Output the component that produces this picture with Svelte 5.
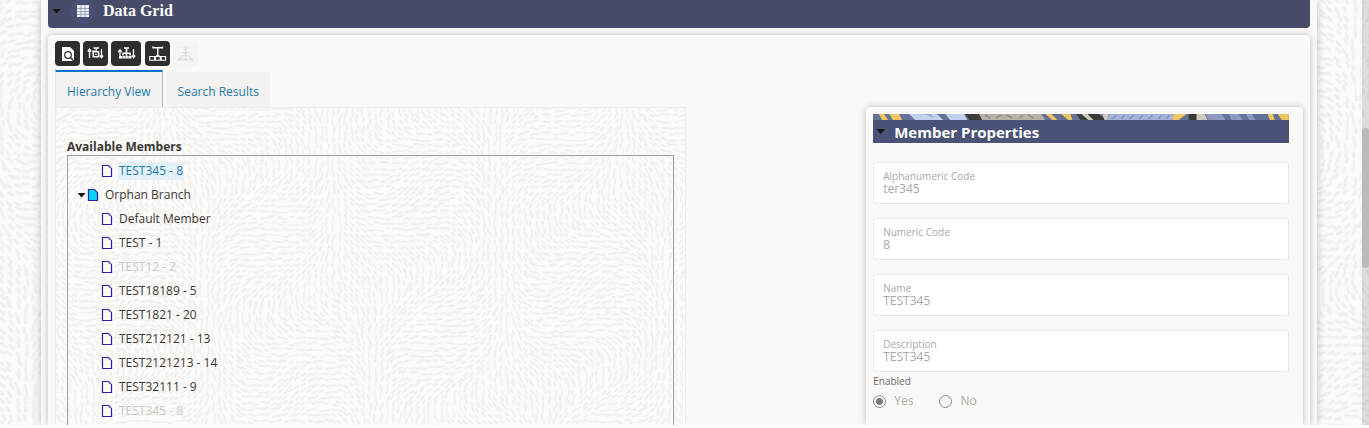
<script lang="ts">
	type Member = { name: string; disabled?: boolean; selected?: boolean };

	const topMembers: Member[] = [{ name: 'TEST345 - 8', selected: true }];

	const orphans: Member[] = [
		{ name: 'Default Member' },
		{ name: 'TEST - 1' },
		{ name: 'TEST12 - 2', disabled: true },
		{ name: 'TEST18189 - 5' },
		{ name: 'TEST1821 - 20' },
		{ name: 'TEST212121 - 13' },
		{ name: 'TEST2121213 - 14' },
		{ name: 'TEST32111 - 9' },
		{ name: 'TEST345 - 8', disabled: true }
	];

	const fields = [
		{ id: 'alpha-code', label: 'Alphanumeric Code', value: 'ter345' },
		{ id: 'num-code', label: 'Numeric Code', value: '8' },
		{ id: 'name', label: 'Name', value: 'TEST345' },
		{ id: 'description', label: 'Description', value: 'TEST345' }
	];

	// short strokes that follow a slow flow field, used as page grain
	function strokes(width: number, height: number, step: number, len: number) {
		let seed = 7;
		const rand = () => {
			seed = (seed * 16807) % 2147483647;
			return seed / 2147483647;
		};
		let d = '';
		for (let y = 0; y < height; y += step) {
			for (let x = 0; x < width; x += step) {
				const px = x + rand() * step * 0.5;
				const py = y + rand() * step * 0.5;
				const a = 1.3 + 1.1 * Math.sin(px / 37 + py / 61) + 0.9 * Math.cos(py / 43 - px / 71);
				const dx = (Math.cos(a) * len) / 2;
				const dy = (Math.sin(a) * len) / 2;
				d += `M${(px - dx).toFixed(1)} ${(py - dy).toFixed(1)}l${(dx * 2).toFixed(1)} ${(dy * 2).toFixed(1)}`;
			}
		}
		return d;
	}

	const coarse = strokes(460, 440, 8, 5);
	const fine = strokes(640, 330, 6, 4);
</script>

{#snippet grain(id: string, d: string, w: number, h: number, stroke: number)}
	<svg class="grain" aria-hidden="true">
		<defs>
			<pattern {id} width={w} height={h} patternUnits="userSpaceOnUse">
				<path {d} fill="none" stroke="#f2f1f0" stroke-width={stroke} stroke-linecap="round" />
			</pattern>
		</defs>
		<rect width="100%" height="100%" fill="url(#{id})" />
	</svg>
{/snippet}

{#snippet leaf(member: Member)}
	<li class="row leaf" class:disabled={member.disabled} role="treeitem" aria-selected={!!member.selected}>
		<svg class="page" viewBox="0 0 12 14" aria-hidden="true">
			<path d="M1.5 1.5h6l3 3.2v7.8h-9z" fill="#fff" stroke="#2322a8" stroke-width="1.2" />
		</svg>
		<span class="name" class:selected={member.selected}>{member.name}</span>
	</li>
{/snippet}

<div class="viewport">
	{@render grain('grain-page', coarse, 460, 440, 3)}

	<main class="page-body">
		<header class="section-bar">
			<button class="caret" aria-label="Collapse Data Grid"></button>
			<span class="badge">
				<svg viewBox="0 0 12 12" aria-hidden="true">
					<rect width="12" height="12" fill="#eef0f6" />
					<path d="M0 3.5h12M0 6.5h12M0 9.3h12M4 0v12M8 0v12" stroke="#7c86a8" stroke-width=".7" />
				</svg>
			</span>
			<h1>Data Grid</h1>
		</header>

		<section class="card">
			<div class="toolbar">
				<button class="tool" aria-label="View">
					<svg viewBox="0 0 25 25">
						<path d="M7 6h8l4 4v10H7z" fill="#fff" />
						<circle cx="13" cy="14" r="3.3" fill="none" stroke="#312d2a" stroke-width="1.2" />
						<path d="M15.4 16.4l3.2 3.4" stroke="#312d2a" stroke-width="1.4" />
					</svg>
				</button>
				<button class="tool" aria-label="Reorder level">
					<svg viewBox="0 0 25 25" fill="none" stroke="#fff">
						<path d="M6.5 17V9M4.8 10.5l1.7-2.3 1.7 2.3M18.5 8v8M16.8 14.5l1.7 2.2 1.7-2.2" stroke-width="1.3" />
						<path d="M10.5 7h5.5M13.2 7v3M9 10.3h3" stroke-width="1.4" />
						<path d="M10.2 10.8h5.4v5h-5.4z" stroke-width="1.5" stroke-linejoin="round" />
						<path d="M12 13.3h2" />
					</svg>
				</button>
				<button class="tool wide" aria-label="Reorder hierarchy">
					<svg viewBox="0 0 30 25" fill="none" stroke="#fff">
						<path d="M9 16V9M7.3 11L9 8.8l1.7 2.2M22.5 8v8M20.8 14.5l1.7 2.2 1.7-2.2" stroke-width="1.3" />
						<path d="M13 7h5M15.5 7v8M12 14.5v-2.2h7v2.2" stroke-width="1.6" />
						<path d="M8 16.3h12.5" stroke-width="2.6" />
						<path d="M11.3 15v3M14.2 15v3M17.2 15v3" stroke="#312d2a" stroke-width=".5" />
					</svg>
				</button>
				<button class="tool" aria-label="Expand branch">
					<svg viewBox="0 0 25 25" fill="none" stroke="#fff">
						<path d="M8 5.5v1.3h9.5V5.5M12.8 6.8v8.5M11 15h3.6" stroke-width="1.4" />
						<path d="M4.7 15.5h4.8v3.8H4.7zM10.4 15.5h4.8v3.8h-4.8zM16.1 15.5h4.5v3.8h-4.5z" stroke-width="1.1" />
					</svg>
				</button>
				<button class="tool off" aria-label="Show hierarchy" disabled>
					<svg viewBox="0 0 25 25" fill="none" stroke="#dcdad8">
						<circle cx="12.5" cy="7" r="1.6" />
						<path d="M12.5 8.6v8M9 11.5h7M6 17.5l6.5-4 6.5 4" />
						<path d="M5 18.5h4M10.5 18.5h4M16 18.5h4" stroke-width="2" />
					</svg>
				</button>
			</div>

			<div class="tabs" role="tablist">
				<button class="tab active" role="tab" aria-selected="true">Hierarchy View</button>
				<button class="tab" role="tab" aria-selected="false">Search Results</button>
			</div>

			<div class="columns">
				<div class="hierarchy" role="tabpanel">
					{@render grain('grain-panel', fine, 640, 330, 2)}
					<h2 id="members-title">Available Members</h2>
					<ul class="tree" role="tree" aria-labelledby="members-title">
						{#each topMembers as member}
							{@render leaf(member)}
						{/each}
						<li class="row branch" role="treeitem" aria-expanded="true" aria-selected="false">
							<span class="caret"></span>
							<svg class="page" viewBox="0 0 12 14" aria-hidden="true">
								<path d="M1.5 1.5h6l3 3.2v7.8h-9z" fill="#00d4ff" stroke="#2322a8" stroke-width="1.2" />
							</svg>
							<span class="name">Orphan Branch</span>
						</li>
						{#each orphans as member}
							{@render leaf(member)}
						{/each}
					</ul>
				</div>

				<aside class="properties">
					<svg class="ribbon" viewBox="0 0 415 6" preserveAspectRatio="none" aria-hidden="true">
						<rect width="415" height="6" fill="#66719a" />
						<path d="M6 0h5l4 6H9zM16 0h10l3 6H20z" fill="#f0c75e" />
						<path d="M36 0h28l6 6H42zM72 0h19l3 6H77z" fill="#c3cfee" />
						<path d="M50 0h8l3 4z" fill="#a3b1da" />
						<path d="M92 0h14l3 6H96z" fill="#3d3a38" />
						<path d="M106 0h62l4 6H109z" fill="#b5b1a9" />
						<path d="M112 1l5 3M123 4l5-3M133 1l6 3M146 4l4-3M155 1l5 3" stroke="#88847d" />
						<path d="M172 0h6l6 6h-5zM188 0h9l2 6h-4z" fill="#f0c75e" />
						<path d="M203 0h22l8 6h-26z" fill="#3d3a38" />
						<path d="M208 0h6l6 6h-5zM229 0h6v6h-4z" fill="#cfcbc3" />
						<path d="M236 0h64v6h-67z" fill="#a5b1d9" />
						<path d="M239 5l4-4M248 5l3-4M256 5l4-4M266 5l3-4M275 5l4-4M285 5l3-4M293 5l3-4" stroke="#7582ad" />
						<path d="M300 0h13l-8 6h-6z" fill="#f0c75e" />
						<path d="M315 0h8v6h-8z" fill="#3d3a38" />
						<path d="M323 0h8l3 6h-11z" fill="#cfcbc3" />
						<path d="M332 0h16l4 6h-17zM355 0h10l4 6h-11zM372 0h6l4 6h-6z" fill="#8d99c3" />
						<path d="M394 0h5l2 6h-5zM404 0h11v6h-7z" fill="#f0c75e" />
					</svg>
					<header class="props-bar">
						<button class="caret" aria-label="Collapse Member Properties"></button>
						<h2>Member Properties</h2>
					</header>

					<div class="fields">
						{#each fields as field}
							<div class="field">
								<label for={field.id}>{field.label}</label>
								<input id={field.id} type="text" value={field.value} disabled />
							</div>
						{/each}
					</div>

					<fieldset class="enabled" disabled>
						<legend>Enabled</legend>
						<div class="options">
							<label><input type="radio" name="enabled" checked /> Yes</label>
							<label><input type="radio" name="enabled" /> No</label>
						</div>
					</fieldset>
				</aside>
			</div>
		</section>
	</main>

	<div class="scrollbar" aria-hidden="true"><div class="thumb"></div></div>
</div>

<style>
	:global(body) {
		background: #fff;
	}
	.viewport {
		position: relative;
		display: flex;
		height: calc(100vh - 3px);
		overflow: hidden;
		background: #fcfbfa;
		color: #3a3734;
		font-family: 'Segoe UI', 'Open Sans', 'Noto Sans', sans-serif;
		font-size: 12px;
	}
	.grain {
		position: absolute;
		inset: 0;
		width: 100%;
		height: 100%;
	}
	button {
		border: 0;
		padding: 0;
		font: inherit;
		cursor: pointer;
	}
	h1,
	h2 {
		margin: 0;
	}
	.page-body {
		position: relative;
		flex: 1;
		display: flex;
		flex-direction: column;
		gap: 7px;
		margin: 0 45px 0 41px;
		padding: 0 7px;
		background: #fbf9f8;
		box-shadow: 0 0 8px rgba(0, 0, 0, 0.25);
	}
	.section-bar {
		display: flex;
		align-items: center;
		box-sizing: border-box;
		height: 28px;
		padding: 0 4px 6px;
		border-radius: 0 0 4px 4px;
		background: #474b68;
		color: #fff;
	}
	.caret {
		width: 9px;
		height: 5px;
		background: #161513;
		clip-path: polygon(0 0, 100% 0, 50% 100%);
	}
	.badge {
		display: grid;
		place-items: center;
		width: 25px;
		height: 25px;
		margin: 0 8px 0 9px;
		border-radius: 50%;
		background: #475178;
	}
	.badge svg {
		width: 12px;
		height: 12px;
	}
	h1 {
		font: bold 16px 'Liberation Serif', 'Times New Roman', serif;
	}
	.card {
		flex: 1;
		display: flex;
		flex-direction: column;
		padding: 6px 7px 0;
		border-radius: 4px 4px 0 0;
		background: #fbf9f8;
		box-shadow: 0 0 6px rgba(0, 0, 0, 0.25);
	}
	.toolbar {
		display: flex;
		gap: 3px;
		margin-bottom: 4px;
	}
	.tool {
		width: 25px;
		height: 25px;
		border-radius: 4px;
		background: #312d2a;
	}
	.tool.wide {
		width: 30px;
		margin-right: 1px;
	}
	.tool.off {
		background: #f7f4f3;
	}
	.tool svg {
		display: block;
		width: 100%;
		height: 100%;
	}
	.tabs {
		display: flex;
		gap: 4px;
	}
	.tab {
		box-sizing: border-box;
		height: 37px;
		padding: 4px 11px 0;
		border-top: 2px solid transparent;
		background: #f4f2f1;
		background-clip: padding-box;
		color: #227aae;
	}
	.tab.active {
		border-top-color: #0572ce;
		border-right: 1px solid #bcb9b6;
		border-left: 1px solid #e8e6e4;
	}
	.columns {
		flex: 1;
		display: flex;
		justify-content: space-between;
	}
	.hierarchy {
		position: relative;
		box-sizing: border-box;
		display: flex;
		flex-direction: column;
		width: 50.6%;
		padding: 31px 11px 0;
		border: 1px solid #eeecea;
		border-bottom: 0;
		background: #fcfbfa;
	}
	.hierarchy h2 {
		position: relative;
		font-size: 12px;
		line-height: 16px;
	}
	.tree {
		position: relative;
		flex: 1;
		margin: 0;
		padding: 3px 0 0;
		border: 1px solid #a19e9b;
		border-bottom: 0;
		list-style: none;
	}
	.row {
		display: flex;
		align-items: center;
		height: 24px;
	}
	.leaf {
		padding-left: 33px;
	}
	.branch {
		padding-left: 9px;
	}
	.branch .caret {
		margin-right: 1px;
	}
	.page {
		width: 12px;
		height: 14px;
	}
	.name {
		margin-left: 5px;
		padding: 0 1px;
		line-height: 18px;
	}
	.name.selected {
		background: #e4f1f9;
		color: #227aae;
	}
	.disabled {
		color: #cbc9c7;
	}
	.properties {
		box-sizing: border-box;
		width: 35%;
		padding: 7px 14px 0 7px;
		border-radius: 4px 4px 0 0;
		background: #fbf9f8;
		box-shadow: 0 0 6px rgba(0, 0, 0, 0.25);
	}
	.ribbon {
		display: block;
		width: 100%;
		height: 6px;
	}
	.props-bar {
		display: flex;
		align-items: center;
		gap: 9px;
		height: 23px;
		padding-left: 3px;
		background: #4a5377;
		color: #fff;
	}
	.props-bar h2 {
		font-size: 15px;
		line-height: 20px;
	}
	.fields {
		display: grid;
		gap: 14px;
		margin-top: 19px;
	}
	.field {
		box-sizing: border-box;
		height: 42px;
		padding: 7px 9px 0;
		border: 1px solid #eceae9;
		border-radius: 2px;
		background: #fff;
	}
	.field label,
	.field input {
		display: block;
		color: #aaa8a6;
	}
	.field label {
		font-size: 10px;
		line-height: 12px;
	}
	.field input {
		width: 100%;
		height: 14px;
		padding: 0;
		border: 0;
		background: none;
		font: inherit;
		line-height: 14px;
	}
	.enabled {
		margin: 3px 0 0;
		padding: 0;
		border: 0;
	}
	legend {
		padding: 0;
		font-size: 10px;
		line-height: 12px;
		color: #6b6866;
	}
	.options {
		display: flex;
		gap: 26px;
		margin-top: 5px;
		color: #aaa8a6;
	}
	.options label {
		display: flex;
		align-items: center;
		gap: 8px;
		line-height: 18px;
	}
	.options input {
		appearance: none;
		box-sizing: border-box;
		width: 13px;
		height: 13px;
		margin: 0;
		border: 1px solid #8b8886;
		border-radius: 50%;
	}
	.options input:checked {
		background: radial-gradient(circle, #7d7a78 3px, transparent 4px);
	}
	.scrollbar {
		position: relative;
		width: 7px;
		background: rgba(0, 0, 0, 0.12);
	}
	.thumb {
		height: 33%;
		margin-top: 128px;
		border-radius: 3px;
		background: #bcbab8;
	}
</style>
